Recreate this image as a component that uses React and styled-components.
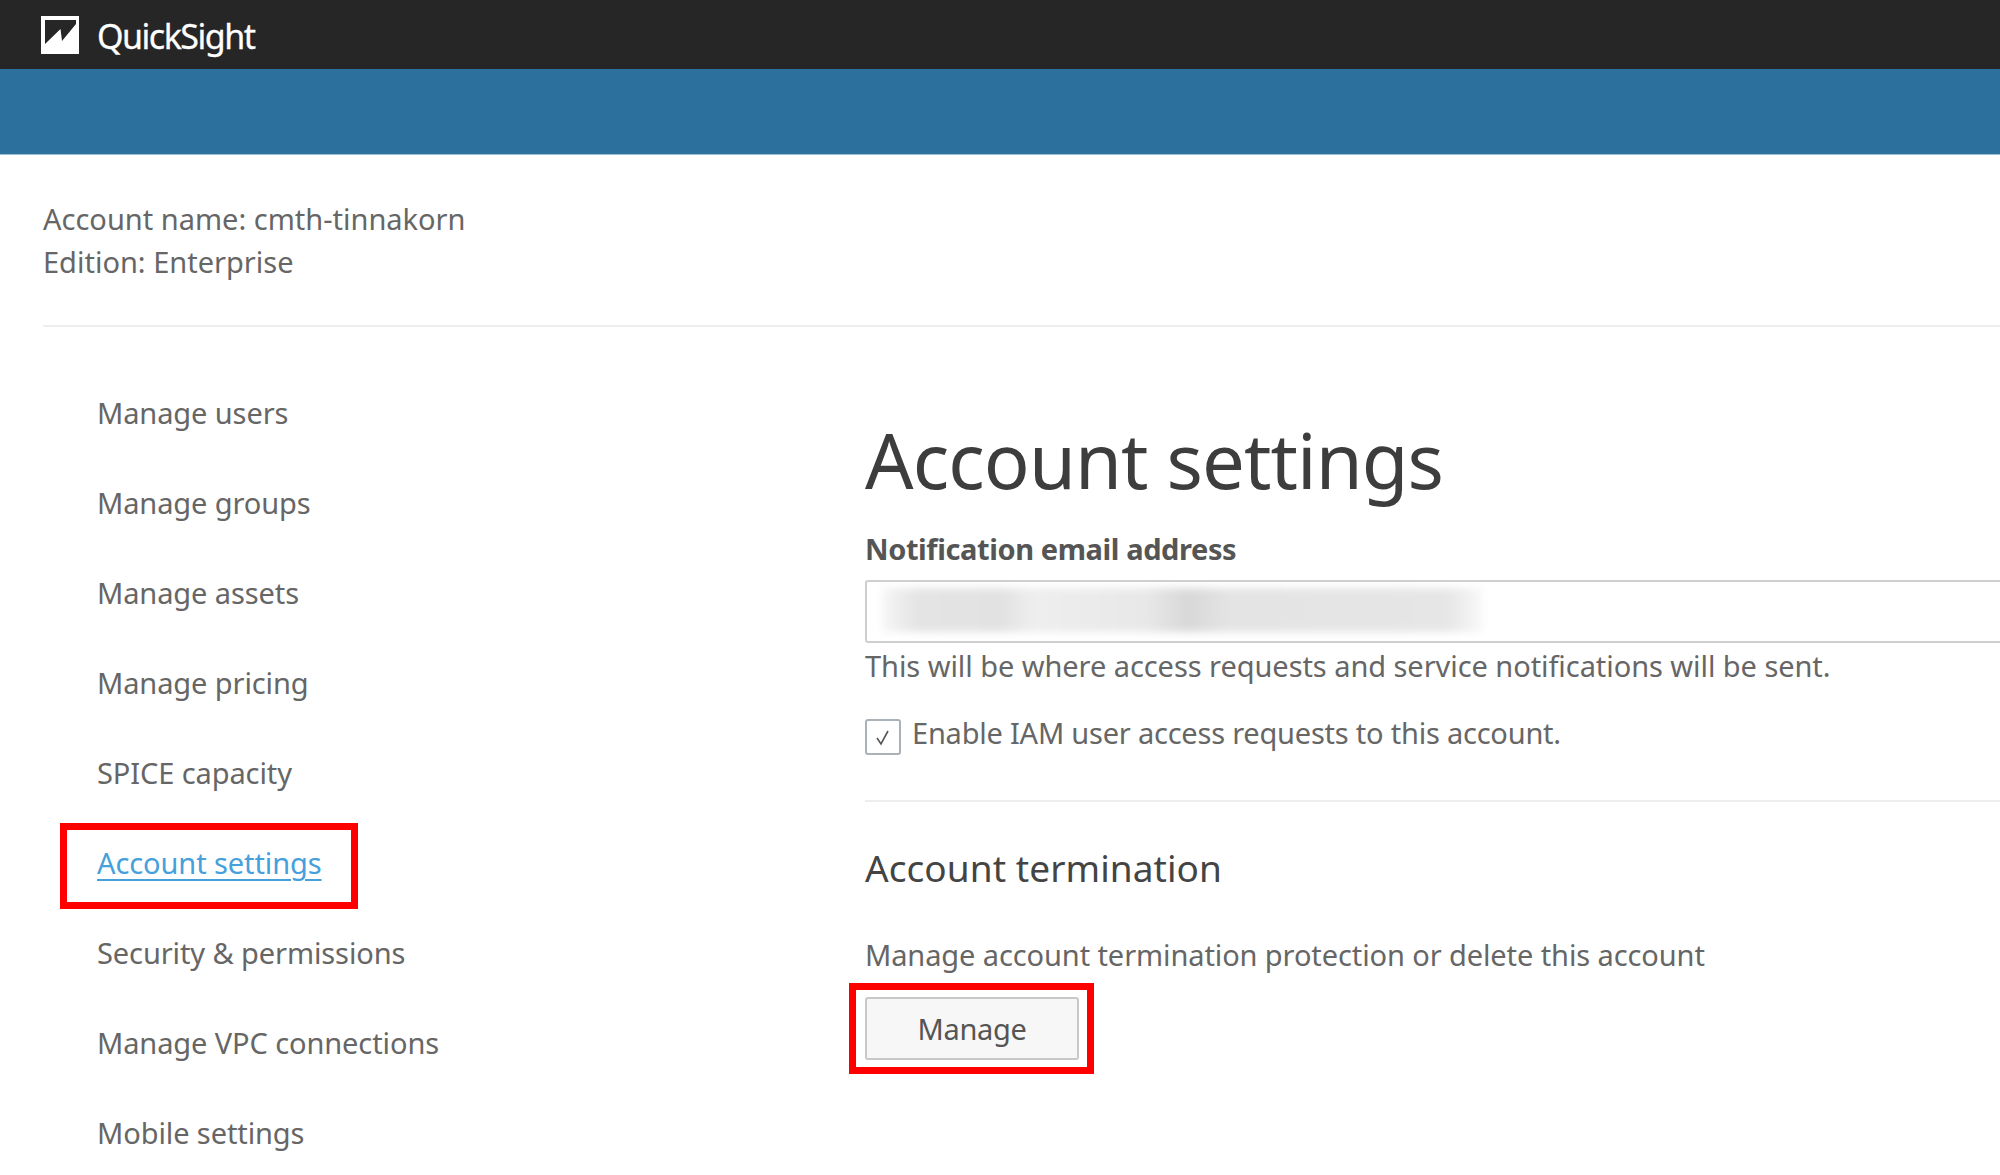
import styled, { createGlobalStyle } from "styled-components";

const GlobalStyle = createGlobalStyle`
  html, body {
    margin: 0;
    padding: 0;
    background: #fff;
    overflow: hidden;
  }
  body {
    font-family: "Noto Sans", "Open Sans", sans-serif;
    color: #666;
  }
`;

const Page = styled.div`
  width: 2000px;
  height: 1175px;
  overflow: hidden;
`;

const TopBar = styled.header`
  height: 69px;
  background: #262626;
  display: flex;
  align-items: center;
  padding-left: 41px;
  gap: 18px;
`;

const Brand = styled.span`
  color: #fff;
  font-size: 34px;
  letter-spacing: -1.5px;
  -webkit-text-stroke: 0.3px #fff;
  position: relative;
  top: 1px;
`;

const BlueBar = styled.div`
  height: 86px;
  background: #2c709e;
  border-bottom: 1px solid #9dc0d8;
  box-sizing: border-box;
`;

const AccountInfo = styled.section`
  margin: 0 0 0 43px;
  padding: 42px 0 42px;
  border-bottom: 2px solid #eeeeee;
  font-size: 29px;
  line-height: 43px;
  letter-spacing: 0;
`;

const Columns = styled.div`
  display: grid;
  grid-template-columns: 865px 1fr;
`;

const SideNav = styled.nav`
  padding: 41px 0 0 97px;
  display: flex;
  flex-direction: column;
`;

const NavItem = styled.a`
  height: 90px;
  line-height: 90px;
  font-size: 29px;
  letter-spacing: -0.1px;
  color: ${(p) => (p.$active ? "#45a0dc" : "#666")};
  text-decoration: ${(p) => (p.$active ? "underline" : "none")};
  text-underline-offset: 5px;
  text-decoration-thickness: 2px;
  position: relative;
`;

const Highlight = styled.span`
  position: absolute;
  border: 7px solid #ff0000;
  box-sizing: border-box;
  pointer-events: none;
`;

const NavHighlight = styled(Highlight)`
  left: -37px;
  top: 5px;
  width: 298px;
  height: 86px;
`;

const Main = styled.main`
  padding-top: 83px;
`;

const Title = styled.h1`
  margin: 0;
  font-size: 76px;
  font-weight: 400;
  line-height: 100px;
  color: #3d3d3d;
  letter-spacing: -0.9px;
`;

const FieldLabel = styled.label`
  display: block;
  margin-top: 19px;
  font-size: 29px;
  line-height: 40px;
  font-weight: 700;
  color: #555;
  letter-spacing: -0.4px;
`;

const EmailBox = styled.div`
  margin-top: 11px;
  height: 63px;
  box-sizing: border-box;
  border: 2px solid #cfcfcf;
  border-right: none;
  border-radius: 3px 0 0 3px;
  padding: 6px 0 0 15px;
`;

const BlurredEmail = styled.div`
  width: 600px;
  height: 44px;
  background: linear-gradient(
    90deg,
    #f6f6f6 0%,
    #e4e4e4 6%,
    #e2e2e2 20%,
    #eeeeee 25%,
    #e8e8e8 44%,
    #d8d8d8 51%,
    #e4e4e4 58%,
    #e6e6e6 94%,
    #f8f8f8 100%
  );
  filter: blur(4px);
`;

const HelpText = styled.p`
  margin: 3px 0 0;
  font-size: 29px;
  line-height: 40px;
  letter-spacing: -0.06px;
`;

const CheckRow = styled.div`
  margin-top: 30px;
  display: flex;
  align-items: flex-start;
  gap: 11px;
  padding-bottom: 45px;
  border-bottom: 2px solid #eeeeee;
`;

const CheckBox = styled.span`
  width: 36px;
  height: 36px;
  box-sizing: border-box;
  border: 2px solid #aab2b8;
  border-radius: 3px;
  display: flex;
  align-items: center;
  justify-content: center;
  margin-top: 3px;
`;

const CheckText = styled.span`
  font-size: 29px;
  line-height: 34px;
  letter-spacing: -0.22px;
`;

const SectionTitle = styled.h2`
  margin: 44px 0 0;
  font-size: 37px;
  font-weight: 400;
  line-height: 44px;
  color: #444;
  letter-spacing: 0.07px;
`;

const SectionText = styled.p`
  margin: 45px 0 0;
  font-size: 29px;
  line-height: 40px;
  letter-spacing: -0.1px;
`;

const ButtonWrap = styled.div`
  position: relative;
  margin-top: 22px;
  width: 214px;
`;

const ManageButton = styled.button`
  width: 214px;
  height: 63px;
  box-sizing: border-box;
  background: #f7f7f7;
  border: 2px solid #c8c8c8;
  border-radius: 3px;
  font-family: inherit;
  font-size: 29px;
  letter-spacing: -0.3px;
  color: #555;
  padding: 0;
`;

const ButtonHighlight = styled(Highlight)`
  left: -16px;
  top: -14px;
  width: 245px;
  height: 91px;
`;

const navItems = [
  "Manage users",
  "Manage groups",
  "Manage assets",
  "Manage pricing",
  "SPICE capacity",
  "Account settings",
  "Security & permissions",
  "Manage VPC connections",
  "Mobile settings",
];

const Logo = () => (
  <svg width="38" height="38" viewBox="0 0 38 38">
    <rect width="38" height="38" fill="#fff" />
    <path d="M4 4h31v4L21 25l-1.5-12L4 28z" fill="#262626" />
  </svg>
);

const App = () => {
  return (
    <Page>
      <GlobalStyle />
      <TopBar>
        <Logo />
        <Brand>QuickSight</Brand>
      </TopBar>
      <BlueBar />
      <AccountInfo>
        <div>Account name: cmth-tinnakorn</div>
        <div>Edition: Enterprise</div>
      </AccountInfo>
      <Columns>
        <SideNav>
          {navItems.map((item) => (
            <NavItem key={item} $active={item === "Account settings"}>
              {item}
              {item === "Account settings" && <NavHighlight />}
            </NavItem>
          ))}
        </SideNav>
        <Main>
          <Title>Account settings</Title>
          <FieldLabel>Notification email address</FieldLabel>
          <EmailBox>
            <BlurredEmail />
          </EmailBox>
          <HelpText>This will be where access requests and service notifications will be sent.</HelpText>
          <CheckRow>
            <CheckBox>
              <svg width="20" height="20" viewBox="0 0 20 20" fill="none">
                <path d="M4 11l4 6L15 4" stroke="#555" strokeWidth="1.6" />
              </svg>
            </CheckBox>
            <CheckText>Enable IAM user access requests to this account.</CheckText>
          </CheckRow>
          <SectionTitle>Account termination</SectionTitle>
          <SectionText>Manage account termination protection or delete this account</SectionText>
          <ButtonWrap>
            <ManageButton>Manage</ManageButton>
            <ButtonHighlight />
          </ButtonWrap>
        </Main>
      </Columns>
    </Page>
  );
};

export default App;
